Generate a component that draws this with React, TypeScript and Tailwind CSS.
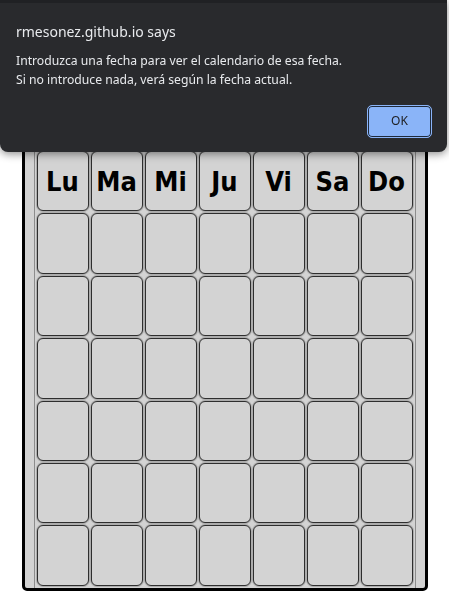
const DAYS = ["Lu", "Ma", "Mi", "Ju", "Vi", "Sa", "Do"];

function Cell({ children }: { children?: React.ReactNode }) {
  return (
    <div className="flex h-[60.4px] items-center justify-center rounded-[6px] border border-[#2e2e2e] bg-[#d3d3d3] shadow-[0_0_0_1px_#acacac]">
      {children}
    </div>
  );
}

export default function App() {
  return (
    <div className="relative min-h-screen overflow-hidden bg-white">
      {/* Calendar */}
      <div className="pt-[145px]">
        <div className="mx-auto w-[406px] rounded-b-[5px] border-[3px] border-black bg-[#d3d3d3] px-[9px]">
          <div className="border border-b-0 border-[#8c8c8c] p-[2px]">
            <div className="grid grid-cols-[repeat(7,52px)] gap-[2px]">
              {DAYS.map((d) => (
                <Cell key={d}>
                  <span className="pt-[3px] font-['DejaVu_Sans_Condensed','DejaVu_Sans',sans-serif] text-[27px] font-bold text-black">
                    {d}
                  </span>
                </Cell>
              ))}
              {Array.from({ length: 42 }).map((_, i) => (
                <Cell key={i} />
              ))}
            </div>
          </div>
        </div>
      </div>

      {/* Alert dialog */}
      <div className="fixed left-0 top-0 w-[447px] rounded-b-[8px] bg-[#292a2d] font-['Noto_Sans',sans-serif] shadow-[0_2px_8px_rgba(0,0,0,0.45)]">
        <div className="h-[3px] bg-[#202124]" />
        <div className="pb-[14px] pl-4 pr-[15px] pt-[19px]">
          <div className="text-[14px] leading-[20px] text-[#e8eaed]">rmesonez.github.io says</div>
          <div className="mt-[9px] text-[12.2px] leading-[19.3px] text-[#e8eaed]">
            <p>Introduzca una fecha para ver el calendario de esa fecha.</p>
            <p>Si no introduce nada, verá según la fecha actual.</p>
          </div>
          <div className="mt-[15px] flex justify-end">
            <button className="h-[33px] w-[65px] rounded-[5px] border border-[#8ab4f8] bg-[#8ab4f8] text-[12px] text-[#202124] shadow-[inset_0_0_0_1px_#1e2a3c]">
              OK
            </button>
          </div>
        </div>
      </div>
    </div>
  );
}
